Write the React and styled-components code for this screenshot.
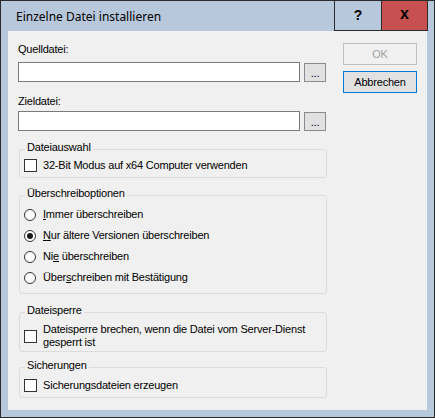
import React from "react"
import styled, { createGlobalStyle } from "styled-components"

const GlobalStyle = createGlobalStyle`
  html, body {
    margin: 0;
    padding: 0;
    background: #ffffff;
  }
  body {
    font-family: "Liberation Sans", Arial, sans-serif;
  }
`

const Window = styled.div`
  width: 435px;
  height: 418px;
  box-sizing: border-box;
  border: 1px solid #2b2b2b;
  background: #b8c8dc;
  display: flex;
  flex-direction: column;
`

const TitleBar = styled.div`
  height: 30px;
  display: flex;
  align-items: stretch;
  padding-right: 6px;
`

const Title = styled.div`
  flex: 1;
  display: flex;
  align-items: center;
  padding-left: 15px;
  font: 12px "Noto Sans", "Open Sans", sans-serif;
  color: #000;
`

const CaptionButton = styled.div`
  width: 47px;
  box-sizing: border-box;
  border-left: 1px solid #2b2b2b;
  border-bottom: 1px solid #2b2b2b;
  border-right: ${(p) => (p.$close ? "1px solid #2b2b2b" : "none")};
  background: ${(p) => (p.$close ? "#c75050" : "transparent")};
  display: flex;
  align-items: center;
  justify-content: center;
  font: bold ${(p) => (p.$close ? 16 : 14)}px "Liberation Sans", Arial, sans-serif;
  color: #000;
  padding-bottom: ${(p) => (p.$close ? 3 : 1)}px;
`

const Client = styled.div`
  flex: 1;
  margin: 0 7px 7px;
  background: #f0f0f0;
  display: flex;
  gap: 16px;
  padding: 12px 10px 0 10px;
  font: 11px/13px "Liberation Sans", Arial, sans-serif;
  letter-spacing: -0.2px;
  color: #000;
`

const Form = styled.div`
  width: 309px;
  display: flex;
  flex-direction: column;
`

const Actions = styled.div`
  width: 74px;
  display: flex;
  flex-direction: column;
  gap: 6px;
`

const Label = styled.div`
  margin-top: ${(p) => p.$top || 0}px;
  height: 13px;
`

const PathRow = styled.div`
  margin-top: ${(p) => p.$top || 0}px;
  display: flex;
  align-items: center;
  gap: 4px;
`

const TextBox = styled.div`
  width: 282px;
  height: 20px;
  box-sizing: border-box;
  border: 1px solid #7a7a7a;
  background: #fff;
`

const BrowseButton = styled.div`
  width: 22px;
  height: 19px;
  box-sizing: border-box;
  border: 1px solid #8a8a8a;
  background: #e1e1e1;
  display: flex;
  align-items: flex-end;
  justify-content: center;
  padding-bottom: 2px;
  font-size: 11px;
  line-height: 11px;
`

const Button = styled.div`
  height: 22px;
  box-sizing: border-box;
  border: 1px solid ${(p) => (p.$disabled ? "#bfbfbf" : p.$default ? "#0078d7" : "#adadad")};
  background: ${(p) => (p.$disabled ? "#f0f0f0" : "#e1e1e1")};
  color: ${(p) => (p.$disabled ? "#a0a0a0" : "#000")};
  display: flex;
  align-items: center;
  justify-content: center;
`

const Group = styled.fieldset`
  margin: ${(p) => p.$top || 0}px 0 0 1px;
  padding: ${(p) => p.$pad || "1px 0 5px 4px"};
  border: 1px solid #dcdcdc;
  border-radius: 3px;
  min-width: 0;
`

const Legend = styled.legend`
  margin-left: 1px;
  padding: 0 2px 4px;
  line-height: 13px;
`

const Option = styled.label`
  display: flex;
  align-items: center;
  gap: ${(p) => (p.$radio ? 7 : 6)}px;
  height: ${(p) => p.$h || (p.$radio ? 21 : 13)}px;
`

const Check = styled.span`
  flex: none;
  width: 13px;
  height: 13px;
  box-sizing: border-box;
  border: 1px solid #333;
  background: #fff;
`

const Radio = styled.span`
  flex: none;
  width: 12px;
  height: 12px;
  box-sizing: border-box;
  border: 1px solid #333;
  border-radius: 50%;
  background: #fff;
  display: flex;
  align-items: center;
  justify-content: center;

  &::after {
    content: "";
    width: 6px;
    height: 6px;
    border-radius: 50%;
    background: ${(p) => (p.$on ? "#1a1a1a" : "transparent")};
  }
`

const Key = styled.span`
  text-decoration: underline;
  text-underline-offset: 1px;
`

const overwrite = [
  { key: "I", rest: "mmer überschreiben" },
  { key: "N", rest: "ur ältere Versionen überschreiben", on: true },
  { pre: "Ni", key: "e", rest: " überschreiben" },
  { pre: "Über", key: "s", rest: "chreiben mit Bestätigung" },
]

export default function App() {
  return (
    <>
      <GlobalStyle />
      <Window>
        <TitleBar>
          <Title>Einzelne Datei installieren</Title>
          <CaptionButton>?</CaptionButton>
          <CaptionButton $close>x</CaptionButton>
        </TitleBar>
        <Client>
          <Form>
            <Label>Quelldatei:</Label>
            <PathRow $top={6}>
              <TextBox />
              <BrowseButton>...</BrowseButton>
            </PathRow>
            <Label $top={13}>Zieldatei:</Label>
            <PathRow $top={3}>
              <TextBox />
              <BrowseButton>...</BrowseButton>
            </PathRow>

            <Group $top={10}>
              <Legend>Dateiauswahl</Legend>
              <Option>
                <Check />
                32-Bit Modus auf x64 Computer verwenden
              </Option>
            </Group>

            <Group $top={9} $pad="0 0 5px 4px">
              <Legend>Überschreiboptionen</Legend>
              {overwrite.map((o) => (
                <Option $radio key={o.rest}>
                  <Radio $on={o.on} />
                  <span>
                    {o.pre}
                    <Key>{o.key}</Key>
                    {o.rest}
                  </span>
                </Option>
              ))}
            </Group>

            <Group $top={10} $pad="2px 0 2px 4px">
              <Legend>Dateisperre</Legend>
              <Option $h={26}>
                <Check />
                <span>
                  Dateisperre brechen, wenn die Datei vom Server-Dienst
                  <br />
                  gesperrt ist
                </span>
              </Option>
            </Group>

            <Group $top={7} $pad="3px 0 5px 4px">
              <Legend>Sicherungen</Legend>
              <Option>
                <Check />
                Sicherungsdateien erzeugen
              </Option>
            </Group>
          </Form>
          <Actions>
            <Button $disabled>OK</Button>
            <Button $default>Abbrechen</Button>
          </Actions>
        </Client>
      </Window>
    </>
  )
}
